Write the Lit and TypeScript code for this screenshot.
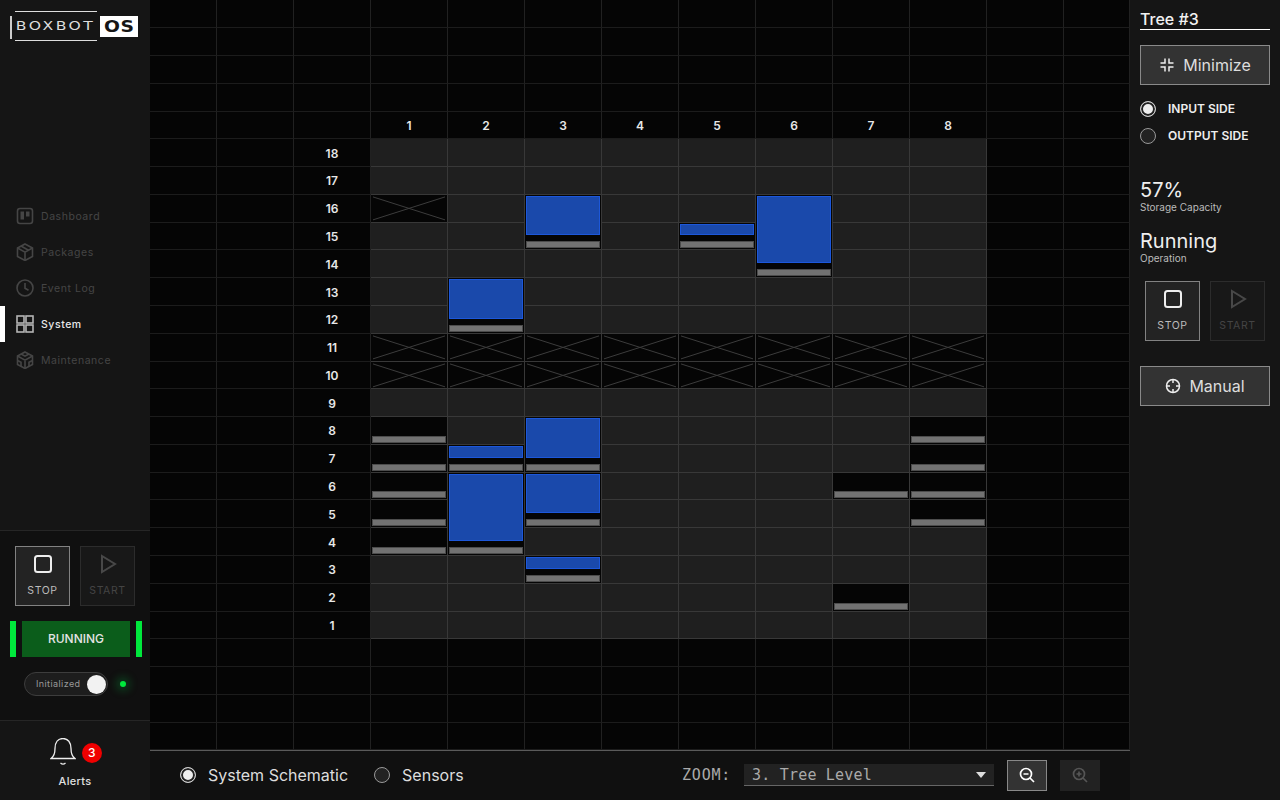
import { LitElement, html, css, svg } from 'lit';
import { customElement } from 'lit/decorators.js';

const ROWS = 27;
const COLS = 13;

// x boxes, [column, row] in schematic numbering
const BLOCKED: number[][] = [[1, 16]];
for (let c = 1; c <= 8; c++) BLOCKED.push([c, 11], [c, 10]);

// storage slots: column, top row, rows spanned, tote (blue) or empty
const SLOTS = [
  { col: 3, row: 16, span: 2, tote: true },
  { col: 5, row: 15, span: 1, tote: true },
  { col: 6, row: 16, span: 3, tote: true },
  { col: 2, row: 13, span: 2, tote: true },
  { col: 3, row: 8, span: 2, tote: true },
  { col: 2, row: 7, span: 1, tote: true },
  { col: 2, row: 6, span: 3, tote: true },
  { col: 3, row: 6, span: 2, tote: true },
  { col: 3, row: 3, span: 1, tote: true },
  { col: 1, row: 8, span: 1, tote: false },
  { col: 1, row: 7, span: 1, tote: false },
  { col: 1, row: 6, span: 1, tote: false },
  { col: 1, row: 5, span: 1, tote: false },
  { col: 1, row: 4, span: 1, tote: false },
  { col: 8, row: 8, span: 1, tote: false },
  { col: 8, row: 7, span: 1, tote: false },
  { col: 8, row: 6, span: 1, tote: false },
  { col: 8, row: 5, span: 1, tote: false },
  { col: 7, row: 6, span: 1, tote: false },
  { col: 7, row: 2, span: 1, tote: false },
];

const gridCol = (c: number) => c + 3;
const gridRow = (r: number) => 24 - r;

const icons = {
  dashboard: svg`<rect x="1.5" y="1.5" width="15" height="15" rx="2.5"/><rect x="4.5" y="4.5" width="3.5" height="8" fill="currentColor" stroke="none"/><rect x="10" y="4.5" width="3.5" height="5" fill="currentColor" stroke="none"/>`,
  packages: svg`<path d="M9 1 16.5 5v8.5L9 17.5 1.500 13.500V5z"/><path d="M1.500 5 9 9.200 16.500 5M9 9.200v8.300M5 3l7.500 4.200"/>`,
  clock: svg`<circle cx="9" cy="9" r="8"/><path d="M9 4v5.300l3.500 2"/>`,
  system: svg`<rect x="1" y="1" width="7" height="7"/><rect x="10" y="1" width="7" height="7"/><rect x="1" y="10" width="7" height="7"/><rect x="10" y="10" width="7" height="7"/>`,
  maintenance: svg`<path d="M9 1 16.500 5v8.500L9 17.500 1.500 13.500V5z"/><path d="M1.500 5 9 9.200 16.500 5M9 9.200v8.300M5 3l4 2.200L13 3M1.500 9.500 5 11.300v4M16.500 9.500 13 11.300v4"/>`,
};

@customElement('app-root')
export class AppRoot extends LitElement {
  static styles = css`
    :host {
      display: block;
      width: 1280px;
      height: 800px;
      overflow: hidden;
      background: #050505;
      font-family: Inter, "Noto Sans", sans-serif;
      color: #eee;
    }
    .app {
      display: flex;
      width: 1280px;
      height: 800px;
    }

    /* left sidebar */
    .sidebar {
      width: 150px;
      flex: none;
      display: flex;
      flex-direction: column;
      background: #151515;
    }
    .logo {
      height: 198px;
      flex: none;
      box-sizing: border-box;
      padding: 11px 0 0 10px;
      display: flex;
      align-items: flex-start;
    }
    .logo-rule {
      width: 2px;
      height: 23px;
      margin-top: 5px;
      background: #ccc;
    }
    .logo-word {
      width: 82px;
      height: 30px;
      margin-left: 3px;
      box-sizing: border-box;
      border-top: 1px solid #ddd;
      border-bottom: 1px solid #ddd;
      display: flex;
      align-items: center;
      justify-content: center;
      font-family: "DejaVu Sans", sans-serif;
      font-size: 12px;
      color: #ddd;
      white-space: nowrap;
    }
    .logo-word span {
      display: block;
      letter-spacing: 1.9px;
      transform: scaleX(1.3);
    }
    .logo-os {
      width: 38px;
      height: 21px;
      margin: 5px 0 0 3px;
      background: #fff;
      color: #151515;
      display: flex;
      align-items: center;
      justify-content: center;
      font-family: "DejaVu Sans", sans-serif;
      font-weight: 700;
      font-size: 15px;
    }
    .logo-os span {
      display: block;
      letter-spacing: 0.5px;
      transform: scaleX(1.25);
    }
    nav {
      display: flex;
      flex-direction: column;
      height: 332px;
      flex: none;
    }
    .nav-item {
      height: 36px;
      flex: none;
      box-sizing: border-box;
      padding-left: 16px;
      display: flex;
      align-items: center;
      gap: 7px;
      font-size: 10.5px;
      letter-spacing: 0.55px;
      color: #454545;
      border-left: 0 solid #fff;
    }
    .nav-item svg {
      width: 18px;
      height: 18px;
      fill: none;
      stroke: currentColor;
      stroke-width: 1.6;
    }
    .nav-item.active {
      color: #e8e8e8;
      font-weight: 500;
      border-left: 5px solid #fff;
      padding-left: 11px;
    }
    .nav-item.active svg {
      color: #b5b5b5;
    }
    .controls {
      height: 191px;
      flex: none;
      box-sizing: border-box;
      background: #101010;
      border-top: 1px solid #262626;
      border-bottom: 1px solid #262626;
      padding-top: 15px;
    }
    .controls .ctrl-row {
      margin-left: 15px;
    }
    .ctrl-row {
      display: flex;
      gap: 10px;
    }
    .ctrl {
      width: 55px;
      height: 60px;
      box-sizing: border-box;
      display: flex;
      flex-direction: column;
      align-items: center;
      padding-top: 7px;
      border: 1px solid #828282;
      background: #232323;
      font-size: 10.5px;
      letter-spacing: 0.6px;
      color: #bbb;
    }
    .ctrl svg {
      width: 20px;
      height: 20px;
      fill: none;
      stroke: #eee;
      stroke-width: 2;
      margin-bottom: 10px;
    }
    .ctrl.off {
      border-color: #2c2c2c;
      background: #181818;
      color: #444;
    }
    .ctrl.off svg {
      stroke: #484848;
    }
    .status {
      margin: 15px 0 0 10px;
      display: flex;
      height: 36px;
    }
    .status i {
      width: 6px;
      background: #00e83c;
    }
    .status span {
      width: 108px;
      margin: 0 6px;
      background: #0b5d1b;
      color: #e4e4e4;
      font-size: 12px;
      font-weight: 500;
      line-height: 36px;
      text-align: center;
    }
    .init {
      display: flex;
      align-items: center;
      margin: 15px 0 0 24px;
    }
    .toggle {
      width: 84px;
      height: 24px;
      box-sizing: border-box;
      border: 1px solid #3d3d3d;
      border-radius: 12px;
      background: #1d1d1d;
      display: flex;
      align-items: center;
      justify-content: space-between;
      padding: 0 1px 0 11px;
      font-size: 9px;
      letter-spacing: 0.4px;
      color: #999;
    }
    .toggle span {
      margin-top: -1px;
    }
    .toggle b {
      width: 19px;
      height: 19px;
      border-radius: 50%;
      background: #f2f2f2;
    }
    .led {
      width: 6px;
      height: 6px;
      margin-left: 12px;
      border-radius: 50%;
      background: #00e83c;
      box-shadow: 0 0 8px 4px rgba(0, 200, 70, 0.25);
    }
    .alerts {
      flex: 1;
      display: flex;
      flex-direction: column;
      align-items: center;
      padding-top: 16px;
      font-size: 11px;
      font-weight: 500;
      letter-spacing: 0.3px;
      color: #e0e0e0;
    }
    .bell {
      display: flex;
      align-items: center;
      gap: 6px;
      margin-left: 2px;
      height: 31px;
      margin-bottom: 6px;
    }
    .bell svg {
      width: 26px;
      height: 30px;
      fill: none;
      stroke: #eee;
      stroke-width: 1.300;
    }
    .badge {
      width: 20px;
      height: 20px;
      border-radius: 50%;
      background: #f00000;
      color: #fff;
      font-size: 12px;
      line-height: 20px;
      text-align: center;
    }

    /* centre */
    .main {
      width: 980px;
      flex: none;
      display: flex;
      flex-direction: column;
    }
    .schematic {
      height: 750px;
      margin-top: 0.45px;
      flex: none;
      display: grid;
      grid-template-columns: 67px repeat(11, 77px) 66px;
      grid-template-rows: repeat(${ROWS}, 1fr);
    }
    .cell {
      box-sizing: border-box;
      min-height: 0;
      padding-top: 1px;
      border-right: 1px solid #212121;
      border-bottom: 1px solid #1c1c1c;
      display: flex;
      align-items: center;
      justify-content: center;
      font-size: 12px;
      font-weight: 600;
      color: #e8e8e8;
    }
    .cell.light {
      background: #1f1f1f;
      border-color: #383838;
    }
    .blocked,
    .slot {
      box-sizing: border-box;
      min-height: 0;
      background: #050505;
      border-right: 1px solid #383838;
      border-bottom: 1px solid #383838;
    }
    .blocked svg {
      display: block;
      width: 100%;
      height: 100%;
      stroke: #3c3c3c;
      stroke-width: 1;
    }
    .slot {
      display: flex;
      flex-direction: column;
      gap: 6px;
      padding: 1px;
    }
    .tote {
      flex: 1;
      min-height: 0;
      box-sizing: border-box;
      background: #1a49ab;
      border: 1px solid #1c57da;
    }
    .spacer {
      flex: 1;
    }
    .bar {
      height: 7px;
      flex: none;
      box-sizing: border-box;
      background: #727272;
      border: 1px solid #4c4c4c;
    }
    .footer {
      flex: 1;
      box-sizing: border-box;
      background: #101010;
      border-top: 1px solid #5a5a5a;
      display: flex;
      align-items: center;
      padding: 0 30px 1px;
      font-size: 16px;
      color: #ddd;
    }
    .radio {
      width: 16px;
      height: 16px;
      flex: none;
      box-sizing: border-box;
      border: 1px solid #999;
      border-radius: 50%;
      background: #222;
    }
    .radio.on {
      background: #eee;
      border-color: #ccc;
      box-shadow: inset 0 0 0 2px #222;
    }
    .opt {
      display: flex;
      align-items: center;
      gap: 12px;
      margin-right: 26px;
    }
    .zoom-label {
      margin-left: auto;
      font-family: "DejaVu Sans Mono", monospace;
      font-size: 15px;
      letter-spacing: 0.75px;
      color: #aaa;
    }
    .select {
      width: 250px;
      height: 22px;
      margin-left: 13px;
      box-sizing: border-box;
      background: #222;
      border-bottom: 1px solid #666;
      display: flex;
      align-items: center;
      justify-content: space-between;
      padding: 0 8px;
      font-family: "DejaVu Sans Mono", monospace;
      font-size: 15px;
      letter-spacing: 0.2px;
      color: #aaa;
    }
    .select i {
      border-left: 5px solid transparent;
      border-right: 5px solid transparent;
      border-top: 6px solid #ddd;
    }
    .zbtn {
      width: 40px;
      height: 31px;
      margin-left: 13px;
      box-sizing: border-box;
      background: #333;
      border: 1px solid #888;
      display: flex;
      align-items: center;
      justify-content: center;
    }
    .zbtn svg {
      width: 16px;
      height: 16px;
      fill: none;
      stroke: #fff;
      stroke-width: 1.700;
    }
    .zbtn.off {
      background: #222;
      border-color: #222;
    }
    .zbtn.off svg {
      stroke: #555;
    }

    /* right panel */
    .panel {
      flex: 1;
      background: #151515;
      box-sizing: border-box;
      padding: 10px 10px 0;
      display: flex;
      flex-direction: column;
    }
    .tree {
      height: 19px;
      border-bottom: 1px solid #fff;
      font-size: 16px;
      font-weight: 500;
      line-height: 19px;
      color: #f2f2f2;
    }
    .wide {
      height: 40px;
      flex: none;
      box-sizing: border-box;
      background: #333;
      border: 1px solid #8a8a8a;
      display: flex;
      align-items: center;
      justify-content: center;
      gap: 8px;
      font-size: 16px;
      color: #ddd;
    }
    .wide svg {
      width: 16px;
      height: 16px;
      fill: none;
      stroke: #eee;
      stroke-width: 1.500;
    }
    .minimize {
      margin-top: 15px;
    }
    .side {
      display: flex;
      align-items: center;
      gap: 12px;
      height: 27px;
      font-size: 12px;
      font-weight: 600;
      color: #eee;
    }
    .sides {
      margin-top: 10px;
    }
    .value {
      font-size: 20px;
      line-height: 24px;
      color: #eee;
    }
    .value.first {
      margin-top: 29px;
    }
    .value.second {
      margin-top: 16px;
    }
    .caption {
      font-size: 10px;
      line-height: 11px;
      color: #bbb;
    }
    .panel-ctrl {
      margin: 17px 0 25px 5px;
    }
  `;

  private ctrlButtons() {
    return html`<div class="ctrl-row">
      <div class="ctrl">
        <svg viewBox="0 0 20 20"><rect x="2" y="2" width="16" height="16" rx="2.500"/></svg>
        STOP
      </div>
      <div class="ctrl off">
        <svg viewBox="0 0 20 20"><path d="M4 2 17 10 4 18z"/></svg>
        START
      </div>
    </div>`;
  }

  private renderCells() {
    const cells = [];
    for (let row = 1; row <= ROWS; row++) {
      for (let col = 1; col <= COLS; col++) {
        const light = col >= 4 && col <= 11 && row >= 6 && row <= 23;
        let label: number | string = '';
        if (col === 3 && row >= 6 && row <= 23) label = 24 - row;
        if (row === 5 && col >= 4 && col <= 11) label = col - 3;
        cells.push(
          html`<div class="cell ${light ? 'light' : ''}" style="grid-area: ${row} / ${col}">${label}</div>`,
        );
      }
    }
    return cells;
  }

  render() {
    return html`<div class="app">
      <aside class="sidebar">
        <div class="logo">
          <div class="logo-rule"></div>
          <div class="logo-word"><span>BOXBOT</span></div>
          <div class="logo-os"><span>OS</span></div>
        </div>
        <nav>
          ${[
            ['Dashboard', icons.dashboard],
            ['Packages', icons.packages],
            ['Event Log', icons.clock],
            ['System', icons.system],
            ['Maintenance', icons.maintenance],
          ].map(
            ([name, icon]) => html`<div class="nav-item ${name === 'System' ? 'active' : ''}">
              <svg viewBox="0 0 18 18">${icon}</svg>${name}
            </div>`,
          )}
        </nav>
        <div class="controls">
          ${this.ctrlButtons()}
          <div class="status"><i></i><span>RUNNING</span><i></i></div>
          <div class="init">
            <div class="toggle"><span>Initialized</span><b></b></div>
            <div class="led"></div>
          </div>
        </div>
        <div class="alerts">
          <div class="bell">
            <svg viewBox="0 0 26 30">
              <path d="M1 20.500h24c-3-2-4-5-4-10 0-6-3-10-8-10S5 4.500 5 10.500c0 5-1 8-4 10z"/>
              <path d="M10.500 25c1.500 1.300 3.500 1.300 5 0"/>
            </svg>
            <div class="badge">3</div>
          </div>
          Alerts
        </div>
      </aside>

      <main class="main">
        <div class="schematic">
          ${this.renderCells()}
          ${BLOCKED.map(
            ([c, r]) => html`<div class="blocked" style="grid-area: ${gridRow(r)} / ${gridCol(c)}">
              <svg viewBox="0 0 77 28" preserveAspectRatio="none">
                <path d="M2 2 75 26M75 2 2 26" vector-effect="non-scaling-stroke"/>
              </svg>
            </div>`,
          )}
          ${SLOTS.map(
            (s) => html`<div
              class="slot"
              style="grid-area: ${gridRow(s.row)} / ${gridCol(s.col)} / span ${s.span}"
            >
              <div class="${s.tote ? 'tote' : 'spacer'}"></div>
              <div class="bar"></div>
            </div>`,
          )}
        </div>
        <div class="footer">
          <div class="opt"><div class="radio on"></div>System Schematic</div>
          <div class="opt"><div class="radio"></div>Sensors</div>
          <div class="zoom-label">ZOOM:</div>
          <div class="select">3. Tree Level<i></i></div>
          <div class="zbtn">
            <svg viewBox="0 0 16 16"><circle cx="7" cy="7" r="5.500"/><path d="M11 11l4 4M4.500 7h5"/></svg>
          </div>
          <div class="zbtn off">
            <svg viewBox="0 0 16 16"><circle cx="7" cy="7" r="5.500"/><path d="M11 11l4 4M4.500 7h5M7 4.500v5"/></svg>
          </div>
        </div>
      </main>

      <aside class="panel">
        <div class="tree">Tree #3</div>
        <div class="wide minimize">
          <svg viewBox="0 0 16 16"><path d="M6 1.500V6H1.500M10 1.500V6h4.500M6 14.500V10H1.500M10 14.500V10h4.500"/></svg>
          Minimize
        </div>
        <div class="sides">
          <div class="side"><div class="radio on"></div>INPUT SIDE</div>
          <div class="side"><div class="radio"></div>OUTPUT SIDE</div>
        </div>
        <div class="value first">57%</div>
        <div class="caption">Storage Capacity</div>
        <div class="value second">Running</div>
        <div class="caption">Operation</div>
        <div class="panel-ctrl">${this.ctrlButtons()}</div>
        <div class="wide">
          <svg viewBox="0 0 16 16"><circle cx="8" cy="8" r="6.500"/><path d="M8 1.500V5M8 11v3.500M1.500 8H5M11 8h3.500"/></svg>
          Manual
        </div>
      </aside>
    </div>`;
  }
}
